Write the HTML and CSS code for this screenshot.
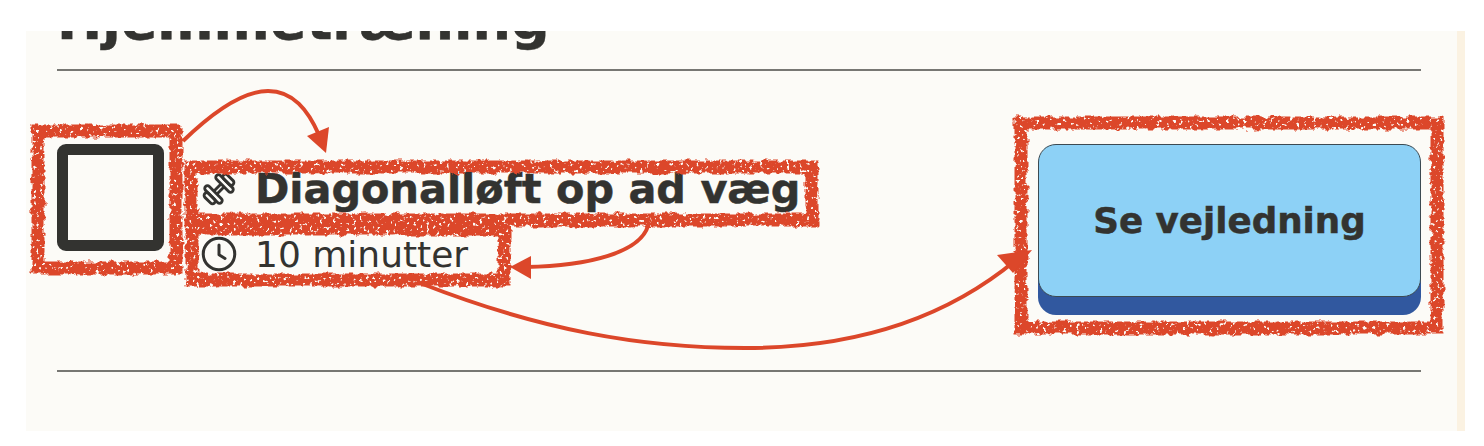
FILE: index.html
```html
<!DOCTYPE html>
<html>
<head>
	<title>Hjemmetræning</title>
	<link rel="stylesheet" href="styles.css">
</head>
<body>
	<div class="panel">
		<h1 class="title">Hjemmetræning</h1>
		<div class="exercise">
			<div class="check"></div>
			<div class="info">
				<div class="name">
					<svg class="icon" viewBox="0 0 24 24" fill="none" stroke="#333330" stroke-width="1.9" stroke-linejoin="round">
						<g transform="rotate(-45 12 12)">
							<path d="M8.5 10.6h7M8.5 13.4h7"/>
							<rect x="5" y="4.5" width="3.6" height="15" rx="1.8"/>
							<rect x="15.4" y="4.5" width="3.6" height="15" rx="1.8"/>
							<rect x="1.4" y="7.5" width="3.6" height="9" rx="1.8"/>
							<rect x="19" y="7.5" width="3.6" height="9" rx="1.8"/>
						</g>
					</svg>
					<span>Diagonalløft op ad væg</span>
				</div>
				<div class="time">
					<svg class="icon" viewBox="0 0 24 24" fill="none" stroke="#333330" stroke-width="2" stroke-linecap="round" stroke-linejoin="round">
						<circle cx="12" cy="12" r="10.5"/>
						<path d="M12 6v6.5l4 2.5"/>
					</svg>
					<span>10 minutter</span>
				</div>
			</div>
			<button class="guide">Se vejledning</button>
		</div>
	</div>

	<svg class="marks" width="1484" height="446" viewBox="0 0 1484 446">
		<defs>
			<filter id="rough" x="-5%" y="-10%" width="110%" height="120%">
				<feTurbulence type="fractalNoise" baseFrequency="0.13" numOctaves="3" seed="4" result="noise"/>
				<feDisplacementMap in="SourceGraphic" in2="noise" scale="7" xChannelSelector="R" yChannelSelector="G" result="moved"/>
				<feTurbulence type="fractalNoise" baseFrequency="0.3" numOctaves="2" seed="9"/>
				<feColorMatrix type="matrix" values="0 0 0 0 0  0 0 0 0 0  0 0 0 0 0  9 0 0 0 -2.4" result="flecks"/>
				<feComposite in="moved" in2="flecks" operator="in"/>
			</filter>
		</defs>
		<g class="scribble" filter="url(#rough)">
			<rect x="38" y="131" width="138" height="137"/>
			<rect x="191" y="167" width="621" height="53"/>
			<rect x="192" y="229" width="312" height="51"/>
			<rect x="1021" y="123" width="416" height="205"/>
		</g>
		<g class="arrows">
			<path d="M183 141C215 110 245 91 268 91C293 91 308 110 319 135"/>
			<path d="M648 226C640 252 590 266 526 267"/>
			<path d="M420 283C540 330 640 348 745 348C860 348 950 315 1016 260"/>
		</g>
		<g class="heads">
			<path d="M326 153 307 136 329 127z"/>
			<path d="M510 267 531 256 531 279z"/>
			<path d="M1032 250 997 255 1013 273z"/>
		</g>
	</svg>
</body>
</html>
```

FILE: styles.css
```css
body {
	margin: 0;
	background-color: #fff;
	font-family: "DejaVu Sans", sans-serif;
	color: #333330;
}

.panel {
	box-sizing: border-box;
	width: 1439px;
	height: 400px;
	margin: 31px 0 0 26px;
	padding: 0 36px 0 31px;
	background-color: #fcfbf7;
	border-right: 8px solid #fbf2e2;
	overflow: hidden;
}

.title {
	height: 57px;
	margin: -19px 0 0;
	font-size: 54px;
	line-height: 18px;
	font-weight: bold;
	-webkit-text-stroke: 0.5px #333330;
	border-bottom: 2px solid #777773;
}

.exercise {
	display: flex;
	align-items: flex-start;
	padding: 73px 0 73px;
	border-bottom: 2px solid #777773;
}

.check {
	box-sizing: border-box;
	width: 107px;
	height: 107px;
	border: 11px solid #333330;
	border-radius: 9px;
}

.info {
	flex: 1;
	margin-left: 37px;
}

.name,
.time {
	display: flex;
	align-items: center;
	gap: 18px;
}

.name {
	height: 37px;
	margin-top: 26px;
	font-size: 41.4px;
	font-weight: bold;
	-webkit-text-stroke: 0.5px #333330;
}

.time {
	height: 36px;
	margin-top: 29px;
	font-size: 36px;
}

.icon {
	flex: none;
	width: 36px;
	height: 36px;
}

.guide {
	width: 383px;
	height: 153px;
	border: 1px solid #3c4a52;
	border-radius: 18px;
	background-color: #8dd1f6;
	box-shadow: 0 18px 0 #31589f;
	font-family: inherit;
	font-size: 35.7px;
	font-weight: bold;
	-webkit-text-stroke: 0.5px #333330;
	color: #333330;
}

.marks {
	position: absolute;
	top: 0;
	left: 0;
	pointer-events: none;
}

.scribble rect {
	fill: none;
	stroke: #dc472a;
	stroke-width: 13;
}

.arrows path {
	fill: none;
	stroke: #dc472a;
	stroke-width: 4;
}

.heads path {
	fill: #dc472a;
}
```
